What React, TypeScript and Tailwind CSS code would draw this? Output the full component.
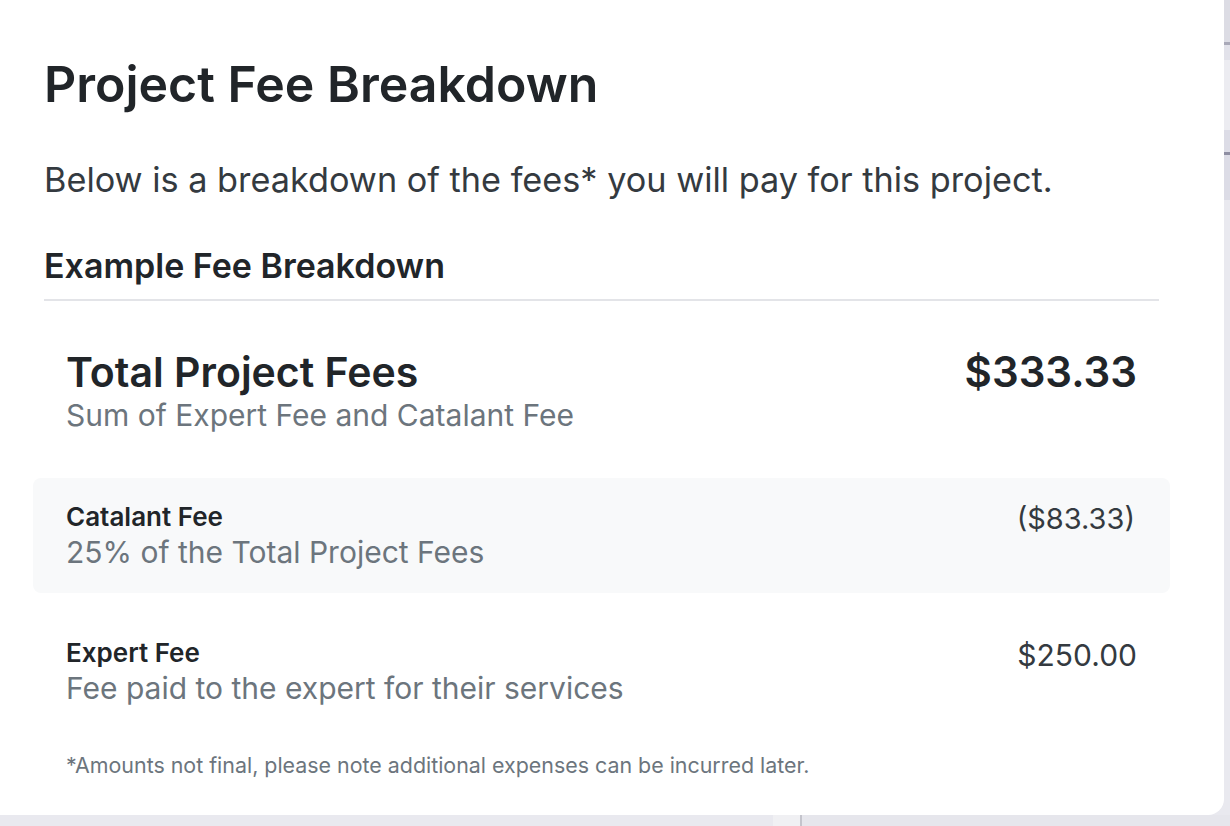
export default function App() {
  return (
    <div className="w-[1230px] h-[826px] overflow-hidden bg-[#e9e9ef] font-['Inter',sans-serif] flex flex-col">
      <div className="flex flex-1">
        {/* Modal */}
        <div className="w-[1224px] h-[815px] bg-white rounded-br-[16px] pl-[44px] pr-[65px] pt-[54px]">
          <h1 className="text-[50px] leading-[60px] font-semibold text-[#212529]">
            Project Fee Breakdown
          </h1>
          <p className="mt-[46px] text-[34.25px] leading-[40px] text-[#343a40]">
            Below is a breakdown of the fees* you will pay for this project.
          </p>
          <h2 className="mt-[46px] text-[34px] leading-[40px] font-semibold text-[#212529] pb-[13px] border-b-2 border-[#e3e4e8]">
            Example Fee Breakdown
          </h2>

          <div className="flex justify-between px-[22px] pt-[47px]">
            <div>
              <div className="text-[41px] leading-[48px] font-semibold text-[#212529]">
                Total Project Fees
              </div>
              <div className="text-[30px] leading-[38px] text-[#6c757d]">
                Sum of Expert Fee and Catalant Fee
              </div>
            </div>
            <div className="text-[42px] leading-[48px] font-semibold text-[#212529]">
              $333.33
            </div>
          </div>

          <div className="mt-[44px] -mx-[11px] bg-[#f8f9fa] rounded-[8px] px-[33px] pt-[23px] pb-[22px] flex justify-between">
            <div>
              <div className="text-[26px] leading-[32px] font-semibold text-[#212529]">
                Catalant Fee
              </div>
              <div className="text-[30px] leading-[38px] text-[#6c757d]">
                25% of the Total Project Fees
              </div>
            </div>
            <div className="text-[29px] leading-[36px] text-[#343a40] pr-[2px]">
              ($83.33)
            </div>
          </div>

          <div className="mt-[44px] flex justify-between px-[22px]">
            <div>
              <div className="text-[26px] leading-[32px] font-semibold text-[#212529]">
                Expert Fee
              </div>
              <div className="text-[30px] leading-[38px] text-[#6c757d]">
                Fee paid to the expert for their services
              </div>
            </div>
            <div className="text-[30px] leading-[36px] text-[#343a40]">
              $250.00
            </div>
          </div>

          <p className="mt-[44px] px-[22px] text-[21.4px] leading-[28px] text-[#6c757d]">
            *Amounts not final, please note additional expenses can be incurred later.
          </p>
        </div>

        {/* Page peeking out on the right */}
        <div className="flex-1 flex flex-col">
          <div className="h-[42px] bg-[#dcdce4]" />
          <div className="h-[3px] bg-[#a9a9b8]" />
          <div className="h-[15px] bg-[#e2e2ea]" />
          <div className="h-[70px] bg-[#ececf1]" />
          <div className="h-[22px] bg-[#dcdce6]" />
          <div className="h-[3px] bg-[#8e8ea2]" />
          <div className="h-[45px] bg-[#dcdce6]" />
          <div className="flex-1 bg-[#e9e9ef]" />
        </div>
      </div>

      {/* Page peeking out at the bottom */}
      <div className="h-[11px] flex">
        <div className="w-[773px] bg-[#e9e9ef]" />
        <div className="w-[27px] bg-[#f0f0f3]" />
        <div className="w-[2px] bg-[#c4c4cc]" />
        <div className="flex-1 bg-[#e6e6ec]" />
      </div>
    </div>
  );
}
